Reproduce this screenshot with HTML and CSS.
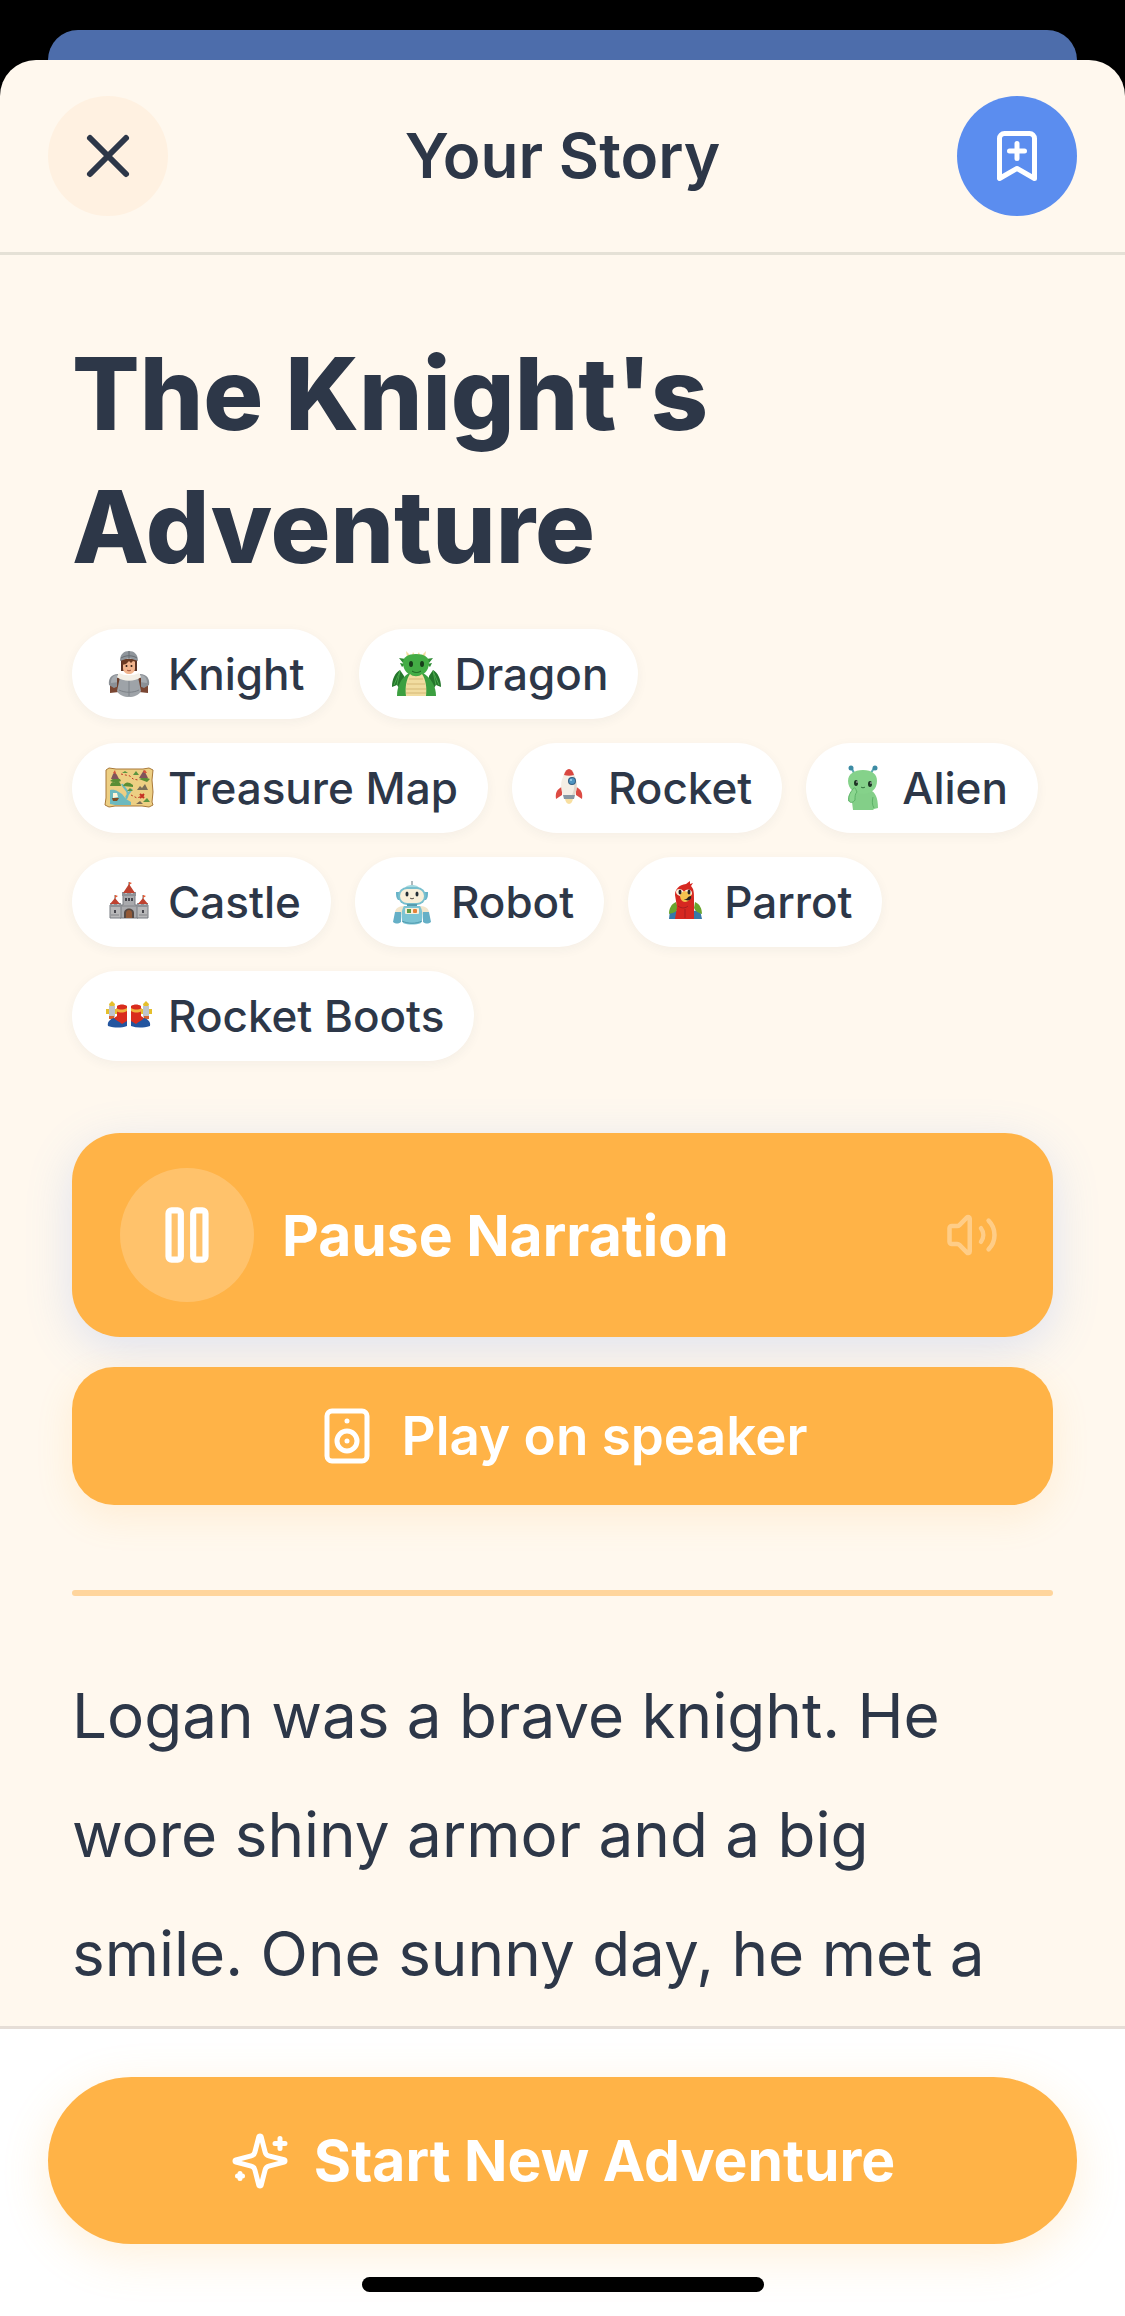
FILE: index.html
```html
<!DOCTYPE html>
<html lang="en">
<head>
    <meta charset="UTF-8">
    <meta name="viewport" content="width=device-width, initial-scale=1.0">
    <title>Your Story</title>
    <link rel="stylesheet" href="styles.css">
</head>
<body>
    <div class="back-sheet"></div>
    <div class="sheet">
        <header class="header">
            <button class="round-button close-button" aria-label="Close">
                <svg class="icon-header" viewBox="0 0 24 24"><path d="M18 6 6 18M6 6l12 12"/></svg>
            </button>
            <h2 class="header-title">Your Story</h2>
            <button class="round-button save-button" aria-label="Save story">
                <svg class="icon-save" viewBox="0 0 24 24"><path d="m19 21-7-4-7 4V5a2 2 0 0 1 2-2h10a2 2 0 0 1 2 2v16z"/><path d="M12 7v6M15 10H9"/></svg>
            </button>
        </header>

        <main class="content">
            <h1 class="story-title">The Knight's Adventure</h1>

            <ul class="tags">
                <li class="tag">
                    <svg class="tag-icon" viewBox="0 0 54 54">
                        <path fill="#7a4632" d="M8 38l8 1 1 6-9 1zM46 38l-8 1-1 6 9 1z"/>
                        <path fill="#8b9096" d="M7 38c-1-6 2-11 9-11l3 11-7 3zM47 38c1-6-2-11-9-11l-3 11 7 3z"/>
                        <path fill="#a6abb0" d="M9 36c0-5 2-8 7-8l1 7zM45 36c0-5-2-8-7-8l-1 7z"/>
                        <path fill="#6d3f2c" d="M15 31h24v9H15z"/>
                        <path fill="#9ea3a8" d="M18 30h18l3 14c-2 4-7 6-12 6s-10-2-12-6z"/>
                        <path fill="none" stroke="#7d8288" d="M27 31v18M17 43c6 3 14 3 20 0"/>
                        <path fill="#f3efe6" d="M17 26c6 3 14 3 20 0l2 4c-6 5-18 5-24 0z"/>
                        <path fill="#5b3425" d="M19 12h16v12H19z"/>
                        <path fill="#f1b58e" d="M21 14h12v7c0 4-3 6-6 6s-6-2-6-6z"/>
                        <path fill="#6b3a22" d="M20 12h14v3l-3-1-2 2-2-2-3 3-4 1z"/>
                        <circle cx="24.5" cy="19" r="1" fill="#2c1c14"/><circle cx="29.5" cy="19" r="1" fill="#2c1c14"/>
                        <path fill="none" stroke="#a0523d" d="M25 23c1 1 3 1 4 0"/>
                        <path fill="#8f959b" d="M18 14c0-7 4-10 9-10s9 3 9 10l-3-1c-4-2-8-2-12 0z"/>
                        <path fill="none" stroke="#676d73" d="M27 4v8M19 11c5-3 11-3 16 0"/>
                    </svg>
                    Knight
                </li>
                <li class="tag">
                    <svg class="tag-icon" viewBox="0 0 54 54">
                        <path fill="#24762b" d="M11 23l4 6v9l-3-1-2 4-2-3-5 2c0-8 3-14 8-17zM44 23l-4 6v9l3-1 2 4 2-3 5 2c0-8-3-14-8-17z"/>
                        <path fill="none" stroke="#49a84c" d="M11 24 8 38M11 24 5 38M44 24l3 14M44 24l6 14"/>
                        <path fill="#f2dda0" d="M18 10l-1-6 5 5zM36 10l1-6-5 5zM23 8l1-3 2 3zM28 8l2-3 1 3z"/>
                        <path fill="#2f8c35" d="M14 16l-4-5 7 1zM40 16l4-5-7 1zM13 20l-2-4 5 1zM41 20l2-4-5 1z"/>
                        <path fill="#3c9f40" d="M8 49c0-10 4-18 12-23h14c8 5 13 13 13 23z"/>
                        <path fill="#43ac45" d="M14 16c0-6 5-9 13-9s13 3 13 9c0 7-5 13-13 13S14 23 14 16z"/>
                        <path fill="#f1dca0" d="M21 27c3 3 9 3 12 0 4 6 5 14 4 22H17c-1-8 0-16 4-22z"/>
                        <path fill="none" stroke="#d5b876" d="M20 32h14M18 37h18M17 42h20M17 46h20"/>
                        <ellipse cx="22" cy="17" rx="2" ry="3" fill="#173d1a"/><ellipse cx="33" cy="17" rx="2" ry="3" fill="#173d1a"/>
                        <path fill="none" stroke="#1d6122" d="M23 24c3 2 6 2 9 0"/>
                    </svg>
                    Dragon
                </li>
                <li class="tag">
                    <svg class="tag-icon" viewBox="0 0 54 54">
                        <path fill="#edcf83" stroke="#a9793a" d="M4 9l3-2 7 1h27l6-1 4 2-1 10 1 12-1 10 1 3-4 2-7-1H13l-6 1-4-2 1-7V19z"/>
                        <path fill="#6db9be" d="M8 29c6-1 8 2 12 4l4 5 5 3v3H13l-5-1z"/>
                        <path fill="none" stroke="#6db9be" stroke-width="2" d="M24 38c5-8-2-10-4-15M24 36l6-8"/>
                        <path fill="#5a8d35" d="M8 25c1-4 3-5 5-3 2-3 6-1 6 3zM21 25c2-4 5-5 10-1v2zM8 20l4-3 6 1 1 2-5 2zM37 18l5-2 6 2-3 3z"/>
                        <path fill="#81545a" d="M9 18l2-5 2-2 2 3 2 4zM37 17l5-8 4 8z"/>
                        <path fill="#d6503b" d="M41 10l2-1 2 3h-3zM11 12l2-3 1 4z"/>
                        <path fill="#7a6e58" d="M35 29l3-4 2 2 3-4 3 6zM34 43l4-3 3 3z"/>
                        <path fill="none" stroke="#bd3b28" stroke-dasharray="2 2" d="M19 13l9 2 3 3 5 1M29 34l6 3 8-3"/>
                        <path stroke="#c62f23" stroke-width="2" d="M38 33l4 4M42 33l-4 4"/>
                        <path fill="#fff5d7" d="M11 32h4l1 4-5 1z"/><path fill="#814d25" d="M10 37h7l-2 3h-4z"/>
                        <path fill="#5c9440" d="M31 14l3-4 3 4zM20 12l3-2 3 2zM25 30l3-3 3 3zM41 41l4-4 3 4z"/>
                    </svg>
                    Treasure Map
                </li>
                <li class="tag">
                    <svg class="tag-icon" viewBox="0 0 54 54">
                        <path fill="#f8dfa0" d="M23 37h8c0 3-2 6-4 6s-4-3-4-6z"/>
                        <path fill="#dc4b43" d="M20 26c-5 2-7 6-6 12l6-4zM34 26c5 2 7 6 6 12l-6-4z"/>
                        <path fill="#f4eee5" d="M21 16c1-5 3-7 6-8 3 1 5 3 6 8 3 6 2 13 0 18H21c-2-5-3-12 0-18z"/>
                        <path fill="#e0d7cc" d="M31 13c5 7 4 15 2 21h-3c3-6 3-14 1-21z"/>
                        <path fill="#d94740" d="M22 14c1-4 3-6 5-6s4 2 5 6c-3 1-7 1-10 0z"/>
                        <circle cx="30" cy="20" r="4" fill="#315e83"/><circle cx="30" cy="20" r="3" fill="#4e94c1"/><circle cx="29" cy="19" r="1" fill="#a7d6ec"/>
                        <path fill="#8797a3" d="M21 34h12l-1 4H22z"/>
                    </svg>
                    Rocket
                </li>
                <li class="tag">
                    <svg class="tag-icon" viewBox="0 0 54 54">
                        <path fill="none" stroke="#5aabb0" stroke-width="2" d="M18 12l-3-6M35 12l3-5"/>
                        <circle cx="15" cy="7" r="2.5" fill="#3c8ba4"/><circle cx="39" cy="7" r="2.5" fill="#3c8ba4"/>
                        <path fill="#83cf88" d="M20 29h14c5 2 8 7 8 18l-4 1-1 1H17l-1-8-4-1c0-6 3-10 8-11z"/>
                        <path fill="#85d28a" d="M12 20c0-7 6-11 15-11s14 4 14 11c0 8-6 13-14 13S12 28 12 20z"/>
                        <path fill="#8bd68f" stroke="#5db268" d="M13 40c-1-5 1-8 4-12 1-2 3-1 3 1l1 2c-2 2-2 4-2 8-2 3-5 3-6 1z"/>
                        <path fill="none" stroke="#5db268" d="M37 36c-1 4-1 8 1 11"/>
                        <ellipse cx="20" cy="22" rx="2" ry="3" fill="#1c3423"/><ellipse cx="34" cy="23" rx="2" ry="3" fill="#1c3423"/>
                        <circle cx="21" cy="21" r=".7" fill="#fff"/><circle cx="35" cy="22" r=".7" fill="#fff"/>
                        <path fill="none" stroke="#2f6f3c" d="M25 26c1 1 3 1 4 0"/>
                    </svg>
                    Alien
                </li>
                <li class="tag">
                    <svg class="tag-icon" viewBox="0 0 54 54">
                        <path fill="none" stroke="#77625a" d="M27 14V7M13 25v-5M41 25v-5"/>
                        <path fill="#e4572f" d="M27 7l3 1-3 2zM13 20l3 1-3 2zM41 20l3 1-3 2z"/>
                        <path fill="#a9aaad" stroke="#777a80" d="M21 19h12v11h3v13H18V30h3z"/>
                        <path fill="#b8b8b9" stroke="#777a80" d="M8 30h11v13H8zM35 30h11v13H35z"/>
                        <path fill="#8e9196" d="M20 17h3v2h2v-2h4v2h2v-2h3v4H20zM8 28h2v2h2v-2h3v2h2v-2h2v4H8zM35 28h2v2h2v-2h3v2h2v-2h2v4H35z"/>
                        <path fill="#be4230" d="M27 9l6 9H21zM13 23l5 6H8zM41 23l5 6H36z"/>
                        <path fill="#564943" d="M22 43v-5c0-6 10-6 10 0v5z"/><path fill="#925936" d="M24 43v-5c0-4 6-4 6 0v5z"/>
                        <path stroke="#47474e" stroke-width="2" d="M24 23v3M27 23v3M30 23v3M13 35v3M41 35v3"/>
                        <path stroke="#85868a" d="M20 31h14M9 40h8M37 40h8"/>
                    </svg>
                    Castle
                </li>
                <li class="tag">
                    <svg class="tag-icon" viewBox="0 0 54 54">
                        <path stroke="#63747b" d="M27 11V6"/>
                        <path fill="#a5d9df" d="M20 13c1-4 13-4 14 0z"/>
                        <path fill="#67b3c8" d="M11 17h4v8h-2c-2-2-2-5-2-8zM43 17h-4v8h2c2-2 2-5 2-8z"/>
                        <rect x="13" y="12" width="28" height="18" rx="9" fill="#78bfce"/>
                        <rect x="15" y="14" width="24" height="14" rx="7" fill="#f8efd9"/>
                        <ellipse cx="22" cy="19" rx="1.5" ry="2.5" fill="#222d35"/><ellipse cx="32" cy="19" rx="1.5" ry="2.5" fill="#222d35"/>
                        <path fill="none" stroke="#504944" d="M25 23c1 1 3 1 4 0"/>
                        <path fill="#579cae" d="M22 29h10v4H22z"/>
                        <path fill="#f3e6cc" d="M10 38c0-4 3-7 9-7v9zM44 38c0-4-3-7-9-7v9z"/>
                        <path fill="#65afc6" d="M10 37h6v10c-3 2-5 2-8 0zM38 37h6l2 10c-3 2-5 2-8 0z"/>
                        <path fill="#7cc4d4" d="M19 31h16c3 4 3 13 1 17-5 2-13 2-18 0-2-4-2-13 1-17z"/>
                        <rect x="20" y="33" width="14" height="6" rx="1" fill="#f7eed9"/>
                        <rect x="22" y="34" width="4" height="4" fill="#609d45"/><rect x="28" y="34" width="4" height="4" rx="1" fill="#e68239"/>
                        <path fill="none" stroke="#4f98ad" d="M17 46c6 3 14 3 20 0"/>
                    </svg>
                    Robot
                </li>
                <li class="tag">
                    <svg class="tag-icon" viewBox="0 0 54 54">
                        <path fill="#3778a9" d="M12 35l9 1-1 8h-9zM42 35l-7 1-1 8h10z"/>
                        <path fill="#69a52e" d="M18 27c-5 2-7 7-7 12 4-1 8-2 9-6zM37 27c5 2 7 7 7 12-4-1-7-3-8-6z"/>
                        <path fill="#d62821" d="M17 20c0-6 4-10 11-11l4-3v3l3-1-2 3c3 3 3 7 3 13v20H17l2-12z"/>
                        <path fill="#fff1dc" d="M18 17c0-4 6-4 8 0 2-4 8-3 8 1 0 3-3 4-6 4s-10-1-10-5z"/>
                        <path fill="#f4c24f" d="M22 20c2-5 8-5 11 0 0 4-3 7-6 7s-5-3-5-7z"/>
                        <path fill="#292320" d="M26 24c4 1 3-3 7-3 1 4-3 6-7 3z"/>
                        <ellipse cx="22" cy="17" rx="1.5" ry="2.5" fill="#242326"/><ellipse cx="31" cy="17" rx="1.5" ry="2.5" fill="#242326"/>
                        <path fill="none" stroke="#a71e20" d="M20 31c4 3 8 2 10 0M27 34v9"/>
                    </svg>
                    Parrot
                </li>
                <li class="tag">
                    <svg class="tag-icon" viewBox="0 0 54 54">
                        <g id="boot">
                            <path fill="#e5bf2c" d="M7 15l3-3 3 3-1 4H8zM4 20h3v5H4zM12 20h3v5h-3z"/>
                            <path fill="#bec4cb" d="M7 17h6v11H7z"/><path fill="#d8632d" d="M7 27h5v3H7z"/>
                            <path fill="#d92c1d" d="M15 17c3-2 7-2 10 0v19H13l-4-5 6-4z"/>
                            <path fill="#efb33d" d="M14 19c4 2 7 2 11 0v3c-4 2-7 2-11 0z"/>
                            <path fill="#23559f" d="M12 29c2 3 5 3 8 6l5-3v5c-6 2-12 2-19 0-1-4 2-7 6-8z"/>
                        </g>
                        <use href="#boot" transform="matrix(-1 0 0 1 54 0)"/>
                    </svg>
                    Rocket Boots
                </li>
            </ul>

            <button class="pause-button">
                <span class="pause-circle">
                    <svg class="icon-pause" viewBox="0 0 24 24"><rect x="14" y="4" width="4" height="16" rx="1"/><rect x="6" y="4" width="4" height="16" rx="1"/></svg>
                </span>
                <span class="pause-label">Pause Narration</span>
                <svg class="icon-volume" viewBox="0 0 24 24"><path d="M11 4.702a.705.705 0 0 0-1.203-.498L6.413 7.587A1.4 1.4 0 0 1 5.416 8H3a1 1 0 0 0-1 1v6a1 1 0 0 0 1 1h2.416a1.4 1.4 0 0 1 .997.413l3.383 3.384A.705.705 0 0 0 11 19.298z"/><path d="M16 9a5 5 0 0 1 0 6M19.364 18.364a9 9 0 0 0 0-12.728"/></svg>
            </button>

            <button class="speaker-button">
                <svg class="icon-button" viewBox="0 0 24 24"><rect x="4" y="2" width="16" height="20" rx="2"/><path d="M12 6h.01M12 14h.01"/><circle cx="12" cy="14" r="4"/></svg>
                Play on speaker
            </button>

            <hr class="divider">

            <p class="story-text">Logan was a brave knight. He wore shiny armor and a big smile. One sunny day, he met a</p>
        </main>

        <footer class="footer">
            <button class="start-button">
                <svg class="icon-button" viewBox="0 0 24 24"><path d="M9.937 15.5A2 2 0 0 0 8.5 14.063l-6.135-1.582a.5.5 0 0 1 0-.962L8.5 9.936A2 2 0 0 0 9.937 8.5l1.582-6.135a.5.5 0 0 1 .963 0L14.063 8.5A2 2 0 0 0 15.5 9.937l6.135 1.581a.5.5 0 0 1 0 .964L15.5 14.063a2 2 0 0 0-1.437 1.437l-1.582 6.135a.5.5 0 0 1-.963 0z"/><path d="M20 3v4M22 5h-4M4 17v2M5 18H3"/></svg>
                Start New Adventure
            </button>
            <div class="home-bar"></div>
        </footer>
    </div>
</body>
</html>
```

FILE: styles.css
```css
* {
    box-sizing: border-box;
}
body {
    display: flex;
    flex-direction: column;
    height: 100vh;
    margin: 0;
    padding-top: 30px;
    background-color: black;
    color: #2d3748;
    font-family: Inter, "Liberation Sans", sans-serif;
}
h1, h2, p, ul {
    margin: 0;
    padding: 0;
}
button {
    border: none;
    padding: 0;
    color: white;
    font-family: inherit;
    cursor: pointer;
}
svg {
    display: block;
    flex-shrink: 0;
}
.back-sheet {
    flex-shrink: 0;
    height: 60px;
    margin: 0 48px -30px;
    border-radius: 30px 30px 0 0;
    background-color: #4d6dab;
}
.sheet {
    position: relative;
    display: flex;
    flex-direction: column;
    flex: 1;
    min-height: 0;
    border-radius: 36px 36px 0 0;
    background-color: #fff8ee;
    overflow: hidden;
}

/* header */
.header {
    display: flex;
    align-items: center;
    justify-content: space-between;
    padding: 36px 48px;
    border-bottom: 3px solid #e5e1d6;
}
.header-title {
    font-size: 62px;
    font-weight: 600;
    line-height: 72px;
}
.round-button {
    display: flex;
    align-items: center;
    justify-content: center;
    width: 120px;
    height: 120px;
    border-radius: 50%;
}
.close-button {
    background-color: #fff1e1;
    color: #2d3748;
}
.save-button {
    background-color: #5b8def;
}
.icon-header, .icon-save, .icon-pause, .icon-volume, .icon-button {
    fill: none;
    stroke: currentColor;
    stroke-width: 2;
    stroke-linecap: round;
    stroke-linejoin: round;
}
.icon-header {
    width: 72px;
    height: 72px;
}
.icon-save, .icon-button {
    width: 60px;
    height: 60px;
}

/* story */
.content {
    flex: 1;
    min-height: 0;
    padding: 72px 72px 0;
    overflow: hidden;
}
.story-title {
    max-width: 800px;
    font-size: 100px;
    font-weight: 800;
    line-height: 133px;
}
.tags {
    display: flex;
    flex-wrap: wrap;
    gap: 24px;
    margin-top: 36px;
    list-style: none;
}
.tag {
    display: flex;
    align-items: center;
    gap: 12px;
    height: 90px;
    padding: 0 30px;
    border-radius: 45px;
    background-color: white;
    box-shadow: 0 3px 12px rgba(45, 55, 72, 0.05);
    font-size: 44px;
    font-weight: 500;
}
.tag-icon {
    width: 54px;
    height: 54px;
}
.pause-button {
    display: flex;
    align-items: center;
    width: 100%;
    margin-top: 72px;
    padding: 35px 54px 35px 48px;
    border-radius: 48px;
    background-color: #ffb347;
    box-shadow: 0 12px 48px rgba(91, 141, 239, 0.2);
    font-size: 57px;
    font-weight: 700;
}
.pause-circle {
    display: flex;
    align-items: center;
    justify-content: center;
    width: 134px;
    height: 134px;
    border-radius: 50%;
    background-color: rgba(255, 255, 255, 0.2);
}
.icon-pause {
    width: 74px;
    height: 74px;
}
.pause-label {
    flex: 1;
    margin-left: 28px;
    text-align: left;
}
.icon-volume {
    width: 54px;
    height: 54px;
    opacity: 0.35;
}
.speaker-button {
    display: flex;
    align-items: center;
    justify-content: center;
    gap: 24px;
    width: 100%;
    height: 138px;
    margin-top: 30px;
    border-radius: 42px;
    background-color: #ffb347;
    box-shadow: 0 12px 36px rgba(255, 179, 71, 0.15);
    font-size: 53px;
    font-weight: 600;
}
.divider {
    height: 6px;
    margin: 85px 0 60px;
    border: none;
    border-radius: 3px;
    background-color: #ffd59c;
}
.story-text {
    max-width: 960px;
    font-size: 62px;
    line-height: 119px;
}

/* footer */
.footer {
    padding: 48px 48px 24px;
    border-top: 3px solid #e6ded7;
    background-color: white;
}
.start-button {
    display: flex;
    align-items: center;
    justify-content: center;
    gap: 24px;
    width: 100%;
    height: 167px;
    border-radius: 84px;
    background-color: #ffb347;
    box-shadow: 0 12px 48px rgba(255, 179, 71, 0.2);
    font-size: 57px;
    font-weight: 700;
}
.home-bar {
    width: 402px;
    height: 15px;
    margin: 33px auto 0;
    border-radius: 8px;
    background-color: black;
}
```
